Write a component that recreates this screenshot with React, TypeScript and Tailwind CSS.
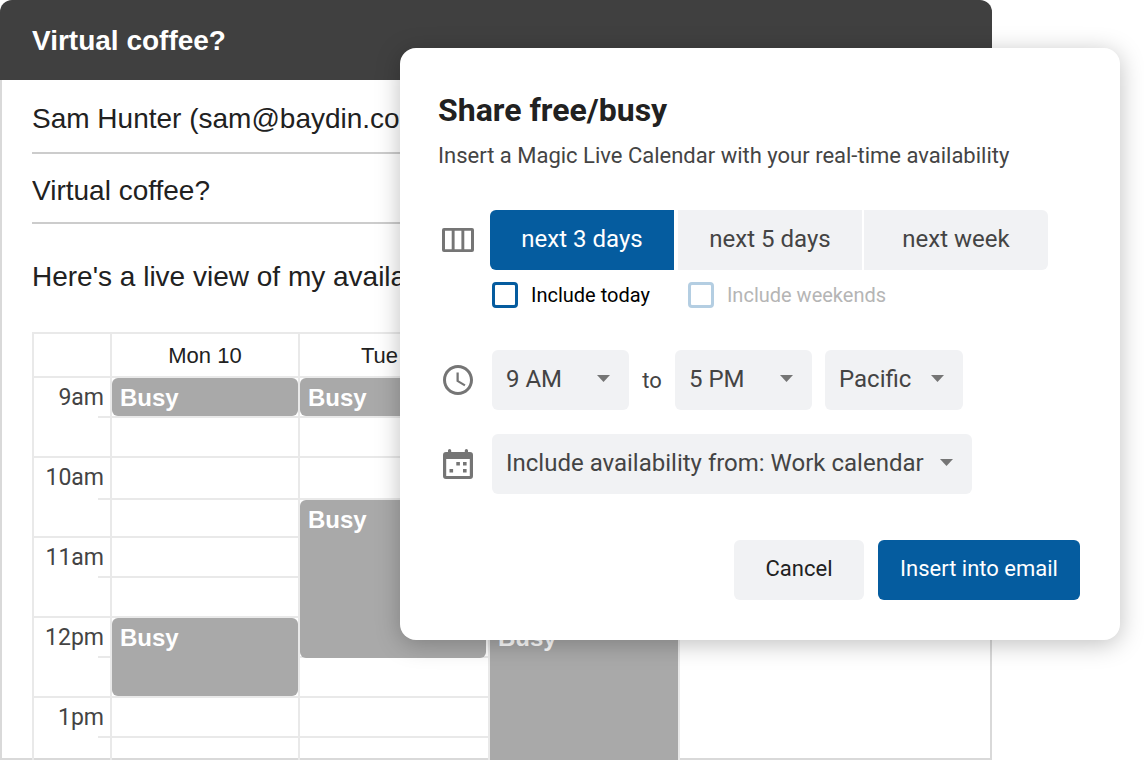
import React, { useState } from 'react';
import clsx from 'clsx';

type Range = '3days' | '5days' | 'week';

const ranges: { id: Range; label: string; className: string }[] = [
  { id: '3days', label: 'next 3 days', className: 'rounded-l-md mr-1' },
  { id: '5days', label: 'next 5 days', className: 'mr-0.5' },
  { id: 'week', label: 'next week', className: 'rounded-r-md' },
];

// one entry per half hour, each day may start an event in that slot
const slots: { hour?: string; tick?: string; height: string; events: (string | null)[] }[] = [
  { hour: '9am', tick: 'top-[38px]', height: 'h-10', events: ['h-[38px] right-0 rounded-md', 'h-[38px] right-0 rounded-md', null] },
  { height: 'h-10', events: [null, null, null] },
  { hour: '10am', tick: 'top-10', height: 'h-[42px]', events: [null, null, null] },
  { height: 'h-[38px]', events: [null, 'h-[158px] right-0.5 rounded-md', null] },
  { hour: '11am', tick: 'top-[38px]', height: 'h-10', events: [null, null, null] },
  { height: 'h-10', events: [null, null, null] },
  { hour: '12pm', tick: 'top-[38px]', height: 'h-10', events: ['h-[78px] right-0 rounded-md', null, 'h-[158px] right-0'] },
  { height: 'h-10', events: [null, null, null] },
  { hour: '1pm', tick: 'top-[38px]', height: 'h-10', events: [null, null, null] },
  { height: 'h-10', events: [null, null, null] },
];

const ColumnsIcon = () => (
  <svg width="32" height="24" viewBox="0 0 32 24" className="shrink-0" aria-hidden="true">
    <path
      fill="#757575"
      fillRule="evenodd"
      d="M2 0h28a2 2 0 0 1 2 2v20a2 2 0 0 1-2 2H2a2 2 0 0 1-2-2V2a2 2 0 0 1 2-2zM3 2.700v18.600h6.700V2.700zM12.600 2.700v18.600h6.800V2.700zM22.300 2.700v18.600H29V2.700z"
    />
  </svg>
);

const ClockIcon = () => (
  <svg width="36" height="36" viewBox="0 0 24 24" fill="#757575" className="-mx-0.5 shrink-0" aria-hidden="true">
    <path d="M11.990 2C6.470 2 2 6.480 2 12s4.470 10 9.990 10C17.520 22 22 17.520 22 12S17.520 2 11.990 2zM12 20c-4.420 0-8-3.580-8-8s3.580-8 8-8 8 3.580 8 8-3.580 8-8 8zm.5-13H11v6l5.250 3.150.75-1.230-4.500-2.670z" />
  </svg>
);

const CalendarIcon = () => (
  <svg width="32" height="32" viewBox="0 0 32 32" fill="#757575" className="shrink-0" aria-hidden="true">
    <path
      fillRule="evenodd"
      d="M6 4V2.500a1.500 1.500 0 0 1 3.200 0V4h13.600V2.500a1.500 1.500 0 0 1 3.200 0V4h2a3 3 0 0 1 3 3v21a3 3 0 0 1-3 3H4a3 3 0 0 1-3-3V7a3 3 0 0 1 3-3zM4.200 11v17h23.600V11z"
    />
    <path d="M14.300 14h3.600v3.600h-3.600zM21 14h3.600v3.600H21zM7.500 21h3.600v3.600H7.500zM21 21h3.600v3.600H21z" />
  </svg>
);

interface SelectProps {
  label: string;
  options: string[];
  className: string;
}

const Select: React.FC<SelectProps> = ({ label, options, className }) => (
  <div className={clsx('relative', className)}>
    <select
      aria-label={label}
      className="h-15 w-full appearance-none rounded-md bg-[#f1f2f4] pb-0.5 pl-3.5 pr-10 text-[24px] text-[#444]"
    >
      {options.map((o) => (
        <option key={o}>{o}</option>
      ))}
    </select>
    <svg
      width="13"
      height="7"
      viewBox="0 0 13 7"
      className="pointer-events-none absolute right-[19px] top-[25px]"
      aria-hidden="true"
    >
      <path d="M0 0h13L6.500 7z" fill="#757575" />
    </svg>
  </div>
);

const Calendar = () => (
  <table className="mt-[35px] table-fixed border-separate border-spacing-0 border-l-2 border-t-2 border-[#e9e9e9]">
    <thead>
      <tr className="h-11 text-[22px] text-[#212121]">
        <td className="w-[78px] border-b-2 border-r-2 border-[#e9e9e9] p-0" />
        <th scope="col" className="w-[188px] border-b-2 border-r-2 border-[#e9e9e9] p-0 font-normal">Mon 10</th>
        <th scope="col" className="w-[190px] border-b-2 border-r-2 border-[#e9e9e9] p-0 font-normal">Tue 11</th>
        <th scope="col" className="w-[190px] border-b-2 border-r-2 border-[#e9e9e9] p-0 font-normal">Wed 12</th>
      </tr>
    </thead>
    <tbody>
      {slots.map((slot, i) => (
        <tr key={i} className={slot.height}>
          {slot.hour && (
            <th
              scope="row"
              rowSpan={2}
              className="relative border-b-2 border-r-2 border-[#e9e9e9] p-0 pr-1.5 pt-1 text-right align-top font-[Roboto,sans-serif] text-[23px] leading-8 font-normal text-[#444]"
            >
              {slot.hour}
              <span className={clsx('absolute right-0 h-0.5 w-3 bg-[#e9e9e9]', slot.tick)} />
            </th>
          )}
          {slot.events.map((event, day) => (
            <td key={day} className={clsx('border-b-2 border-r-2 border-[#e9e9e9] p-0', event && 'relative')}>
              {event && (
                <div className={clsx('absolute left-0 top-0 bg-[#a9a9a9] px-2 pt-1 text-[24px] leading-8 font-bold text-white', event)}>
                  Busy
                </div>
              )}
            </td>
          ))}
        </tr>
      ))}
    </tbody>
  </table>
);

const ShareDialog = () => {
  const [range, setRange] = useState<Range>('3days');
  const [includeToday, setIncludeToday] = useState(false);

  return (
    <div
      role="dialog"
      aria-labelledby="share-title"
      className="absolute left-[400px] right-6 top-12 rounded-2xl bg-white pb-10 pl-[38px] pr-10 pt-[42px] font-[Roboto,sans-serif] shadow-[0_4px_24px_rgba(0,0,0,0.25)]"
    >
      <h2 id="share-title" className="text-[32px] leading-10 font-bold text-[#212121]">Share free/busy</h2>
      <p className="mt-2.5 text-[22px] leading-8 text-[#444]">
        Insert a Magic Live Calendar with your real-time availability
      </p>

      <div className="mt-[38px] flex items-center pl-1">
        <ColumnsIcon />
        <div className="ml-4 flex">
          {ranges.map((r) => (
            <button
              key={r.id}
              type="button"
              onClick={() => setRange(r.id)}
              className={clsx(
                'h-15 w-46 pb-0.5 text-[24px]',
                r.className,
                range === r.id ? 'bg-[#055c9f] text-white' : 'bg-[#f1f2f4] text-[#444]'
              )}
            >
              {r.label}
            </button>
          ))}
        </div>
      </div>

      <div className="mt-3 flex gap-[38px] pl-[54px] text-[20px] leading-[26px]">
        <label className="flex items-center gap-[13px] text-black">
          <input
            type="checkbox"
            checked={includeToday}
            onChange={(e) => setIncludeToday(e.target.checked)}
            className="size-[26px] appearance-none rounded border-[3px] border-[#055c9f] bg-white checked:bg-[#055c9f]"
          />
          Include today
        </label>
        <label className="flex items-center gap-[13px] text-[#b5b5b5]">
          <input
            type="checkbox"
            disabled
            className="size-[26px] appearance-none rounded border-[3px] border-[#b4cee2] bg-white"
          />
          Include weekends
        </label>
      </div>

      <div className="mt-[42px] flex items-center pl-1">
        <ClockIcon />
        <Select label="Start time" options={['9 AM', '10 AM', '11 AM']} className="ml-[18px] w-[137px]" />
        <span className="w-[46px] text-center text-[22px] text-[#444]">to</span>
        <Select label="End time" options={['5 PM', '6 PM', '7 PM']} className="w-[137px]" />
        <Select label="Time zone" options={['Pacific', 'Central', 'Eastern']} className="ml-[13px] w-[138px]" />
      </div>

      <div className="mt-6 flex items-center pl-1">
        <CalendarIcon />
        <Select
          label="Calendar"
          options={['Include availability from: Work calendar', 'Include availability from: Home calendar']}
          className="ml-[18px] w-[480px]"
        />
      </div>

      <div className="mt-[46px] flex justify-end gap-3.5 text-[22px]">
        <button type="button" className="h-15 w-[130px] rounded-md bg-[#f1f2f4] pb-1 text-[#212121]">Cancel</button>
        <button type="button" className="h-15 w-[202px] rounded-md bg-[#055c9f] pb-1 text-white">Insert into email</button>
      </div>
    </div>
  );
};

const App: React.FC = () => {
  return (
    <div className="relative h-screen overflow-hidden bg-white font-['Liberation_Sans',Arial,sans-serif]">
      <div className="mr-[152px] flex h-full flex-col">
        <header className="flex h-20 shrink-0 items-center rounded-t-xl bg-[#404040] px-8 pt-0.5">
          <h1 className="text-[28px] font-bold text-white">Virtual coffee?</h1>
        </header>
        <main className="min-h-0 flex-1 border-x-2 border-b-2 border-[#d9d9d9] px-[30px] text-[28px] text-[#212121]">
          <input
            aria-label="To"
            defaultValue="Sam Hunter (sam@baydin.com)"
            className="block h-[74px] w-full border-b-2 border-[#cccccc] pt-1.5 outline-none"
          />
          <input
            aria-label="Subject"
            defaultValue="Virtual coffee?"
            className="block h-[70px] w-full border-b-2 border-[#cccccc] pt-1.5 outline-none"
          />
          <p className="mt-[33px] leading-10">Here's a live view of my availability:</p>
          <Calendar />
        </main>
      </div>
      <ShareDialog />
    </div>
  );
};

export default App;
